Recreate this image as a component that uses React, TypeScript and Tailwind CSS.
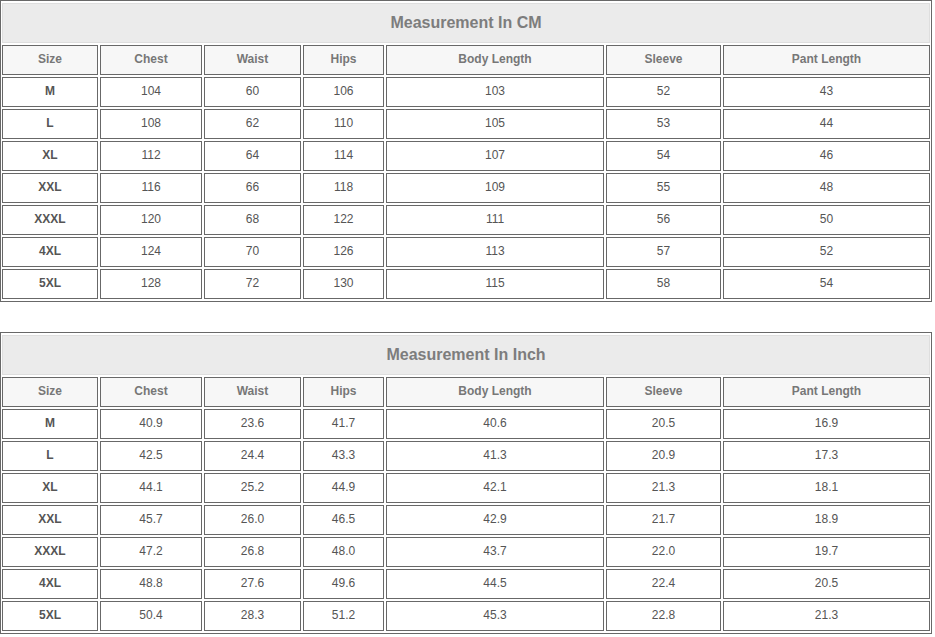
import React from "react";

const headers = ["Size", "Chest", "Waist", "Hips", "Body Length", "Sleeve", "Pant Length"];

const cmRows: string[][] = [
  ["M", "104", "60", "106", "103", "52", "43"],
  ["L", "108", "62", "110", "105", "53", "44"],
  ["XL", "112", "64", "114", "107", "54", "46"],
  ["XXL", "116", "66", "118", "109", "55", "48"],
  ["XXXL", "120", "68", "122", "111", "56", "50"],
  ["4XL", "124", "70", "126", "113", "57", "52"],
  ["5XL", "128", "72", "130", "115", "58", "54"],
];

const inchRows: string[][] = [
  ["M", "40.9", "23.6", "41.7", "40.6", "20.5", "16.9"],
  ["L", "42.5", "24.4", "43.3", "41.3", "20.9", "17.3"],
  ["XL", "44.1", "25.2", "44.9", "42.1", "21.3", "18.1"],
  ["XXL", "45.7", "26.0", "46.5", "42.9", "21.7", "18.9"],
  ["XXXL", "47.2", "26.8", "48.0", "43.7", "22.0", "19.7"],
  ["4XL", "48.8", "27.6", "49.6", "44.5", "22.4", "20.5"],
  ["5XL", "50.4", "28.3", "51.2", "45.3", "22.8", "21.3"],
];

// column widths measured from the chart (cell borders included)
const gridCols = "grid-cols-[96px_102px_97px_81px_218px_115px_207px]";

function SizeTable({ title, rows }: { title: string; rows: string[][] }) {
  return (
    <div className="w-[932px] border border-[#686868] px-[1px] py-[2px]">
      <div className={`grid ${gridCols} gap-[2px]`}>
        <div className="col-span-7 flex h-[40px] items-center justify-center border border-[#dedede] bg-[#ebebeb] text-[16px] font-bold text-[#7d7d7d]">
          {title}
        </div>

        {headers.map((h) => (
          <div
            key={h}
            className="flex h-[30px] items-center justify-center border border-[#686868] bg-[#f7f7f7] pb-[2px] text-[12px] font-bold text-[#777]"
          >
            {h}
          </div>
        ))}

        {rows.map((row) =>
          row.map((val, i) => (
            <div
              key={row[0] + i}
              className={`flex h-[30px] items-center justify-center border border-[#686868] bg-white pb-[2px] text-[12px] text-[#555] ${
                i === 0 ? "font-bold" : ""
              }`}
            >
              {val}
            </div>
          ))
        )}
      </div>
    </div>
  );
}

export default function App() {
  return (
    <div className="min-h-[637px] w-[935px] bg-white font-['Liberation_Sans',Arial,sans-serif]">
      <div className="flex flex-col gap-[30px]">
        <SizeTable title="Measurement In CM" rows={cmRows} />
        <SizeTable title="Measurement In Inch" rows={inchRows} />
      </div>
    </div>
  );
}
